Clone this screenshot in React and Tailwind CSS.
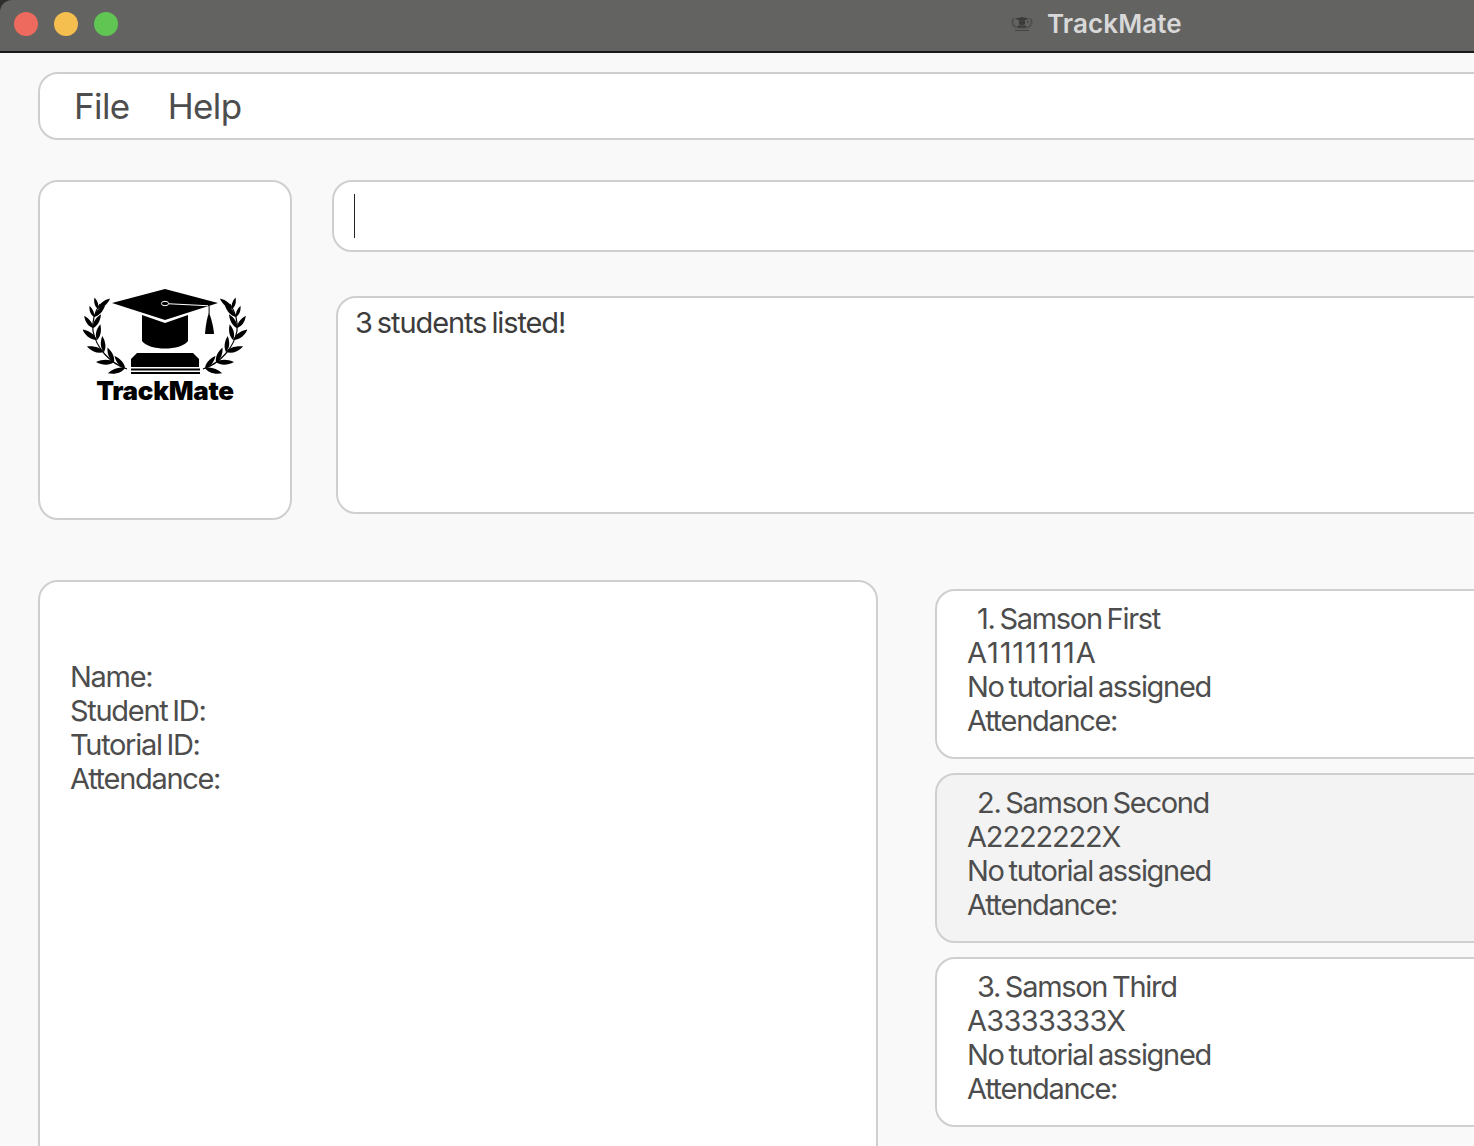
import React from 'react';

const font = { fontFamily: 'Inter, "Liberation Sans", sans-serif' };
const bodyText = 'text-[29px] leading-[34px] tracking-[-1.3px] [word-spacing:-2px]';

const students = [
  { no: '1. Samson First', indent: 'pl-[10px]', id: 'A1111111A', idTrack: 'tracking-[0.9px]', bg: 'bg-white' },
  { no: '2. Samson Second', indent: 'pl-[10px]', id: 'A2222222X', idTrack: 'tracking-[-1.15px]', bg: 'bg-[#f3f3f3]' },
  { no: '3. Samson Third', indent: 'pl-[10px]', id: 'A3333333X', idTrack: 'tracking-[-0.7px]', bg: 'bg-white' },
];

// points along the wreath stem, bottom to top: x, y, direction
const stem = [
  [42, 79, -165], [31, 73, -148], [21, 63, -130], [14, 51, -112],
  [10, 39, -94], [11, 28, -80], [15, 20, -75],
];

const Leaf = ({ x, y, angle, len }) => (
  <path
    transform={`translate(${x} ${y}) rotate(${angle}) scale(${len / 16})`}
    d="M0 0C4-3.200 10-3.200 16 0 10 2.800 4 2.800 0 0Z"
  />
);

const Laurel = () => (
  <g>
    <path d="M44 80C26 74 13 58 10 42 9 33 11 24 17 15" fill="none" stroke="currentColor" strokeWidth="1.2" />
    {stem.map(([x, y, a], i) => (
      <g key={i}>
        <Leaf x={x} y={y} angle={a - 32} len={i > 4 ? 12 : i > 3 ? 15 : 18} />
        <Leaf x={x} y={y} angle={a + 34} len={i > 4 ? 16 : 16} />
      </g>
    ))}
  </g>
);

const Logo = ({ width, height, color, hole }) => (
  <svg width={width} height={height} viewBox="0 0 164 90" className="block" style={{ color }}>
    <g fill="currentColor">
      <Laurel />
      <g transform="translate(164 0) scale(-1 1)">
        <Laurel />
      </g>
      <path d="M82 0 135 14 82 31 29 14Z" />
      <path d="M59 26 82 34 105 26V52C98 62 66 62 59 52Z" />
      <ellipse cx="82" cy="14.500" rx="3.600" ry="2.200" fill="none" stroke={hole} strokeWidth="1" />
      <path d="M85.500 14.200 125 16.200V17.200L85.500 15.200Z" fill={hole} />
      <path d="M125.600 17h1v8h-1Z" />
      <path d="M126 24C128 28 130.500 38 131 45H122C122.500 38 124 28 126 24Z" />
      <path d="M54 64H110L116 70V78H48V70Z" />
      <path d="M48 79.500H117V81.500H48ZM48 83H117V85H48Z" />
    </g>
  </svg>
);

export default function App() {
  return (
    <div style={font} className="w-[1474px] h-[1146px] overflow-hidden bg-[#f9f9f9] text-[#4d4d4d] flex flex-col">
      <div className="h-[53px] shrink-0 bg-[#2e2e2e]">
        <div className="h-full bg-[#636361] rounded-tl-[12px] border-b-2 border-[#1a1a1a] flex items-center pl-[14px] pb-[3px]">
          <div className="flex gap-[16px]">
            <div className="w-6 h-6 rounded-full bg-[#ee6a5f]" />
            <div className="w-6 h-6 rounded-full bg-[#f5bf4f]" />
            <div className="w-6 h-6 rounded-full bg-[#61c554]" />
          </div>
          <div className="ml-[893px] flex items-center">
            <div className="mr-[14px] flex flex-col items-center gap-[1px]">
              <Logo width={22} height={12} color="#3a3a38" hole="#636361" />
              <div className="w-[14px] h-px bg-[#444442]" />
            </div>
            <span className="text-[26px] leading-[30px] font-semibold text-[#d8d8d8] tracking-[0.1px] -mt-[1px]">TrackMate</span>
          </div>
        </div>
      </div>

      <div className="pl-[38px] pt-[19px] w-[1700px]">
        <div className="h-[68px] bg-white border-2 border-[#cfcfcf] rounded-[20px] flex items-center pl-[34px] gap-[38px] text-[35px] tracking-[-0.6px]">
          <span>File</span>
          <span>Help</span>
        </div>

        <div className="flex mt-[40px]">
          <div className="w-[254px] h-[340px] shrink-0 bg-white border-2 border-[#cfcfcf] rounded-[20px] flex flex-col items-center justify-center">
            <div className="flex flex-col items-center -mt-[7px]">
              <Logo width={164} height={90} color="#000" hole="#fff" />
              <span className="-mt-[1px] text-[26px] leading-[26px] font-black text-black tracking-[-0.3px]">TrackMate</span>
            </div>
          </div>
          <div className="flex-1 pl-[40px]">
            <div className="h-[72px] bg-white border-2 border-[#cfcfcf] rounded-[20px] flex items-center pl-[20px]">
              <div className="w-px h-[44px] bg-[#222]" />
            </div>
            <div className={`ml-[4px] mt-[44px] h-[218px] bg-white border-2 border-[#cfcfcf] rounded-[20px] pl-[17px] pt-[8px] text-[#3c3c3c] tracking-[-1.1px] ${bodyText.replace('tracking-[-1.3px] ', '')}`}>
              3 students listed!
            </div>
          </div>
        </div>

        <div className="flex mt-[60px]">
          <div className={`w-[840px] h-[640px] shrink-0 bg-white border-2 border-[#cfcfcf] rounded-[20px] pl-[30px] pt-[78px] ${bodyText}`}>
            <div>Name:</div>
            <div>Student ID:</div>
            <div>Tutorial ID:</div>
            <div>Attendance:</div>
          </div>
          <div className="flex-1 pl-[57px] pt-[9px] flex flex-col gap-[14px]">
            {students.map((s) => (
              <div key={s.id} className={`h-[170px] border-2 border-[#cfcfcf] rounded-[20px] pl-[30px] pt-[11px] ${bodyText} ${s.bg}`}>
                <div className={s.indent}>{s.no}</div>
                <div className={s.idTrack}>{s.id}</div>
                <div>No tutorial assigned</div>
                <div>Attendance:</div>
              </div>
            ))}
          </div>
        </div>
      </div>
    </div>
  );
}
